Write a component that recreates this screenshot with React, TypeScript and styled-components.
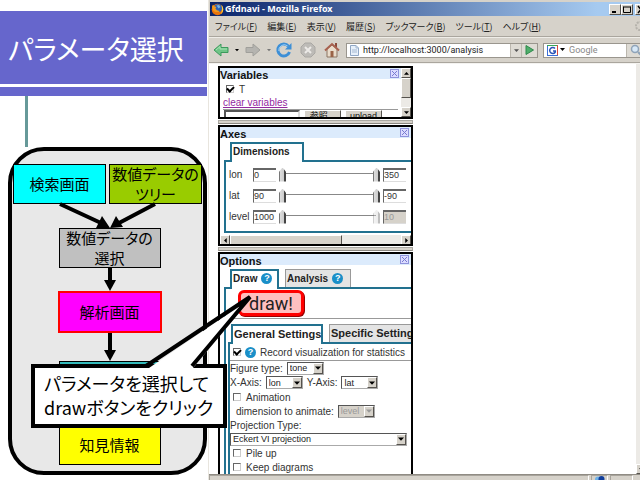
import React from "react";
import styled, { createGlobalStyle, css } from "styled-components";

const Global = createGlobalStyle`
  * { box-sizing: border-box; }
  body { margin: 0; background: #fff; overflow: hidden; }
  button, input, select { font: inherit; color: inherit; margin: 0; }
`;

const JP = `"Noto Sans CJK JP", sans-serif`;
const UI = `"Liberation Sans", "Noto Sans CJK JP", sans-serif`;

/* ---------- slide ---------- */

const Slide = styled.main`
  display: grid;
  grid-template-columns: 32.5% 1fr;
  grid-template-rows: minmax(0, 1fr);
  height: 100vh;
  overflow: hidden;
`;

const Outline = styled.section`
  display: flex;
  flex-direction: column;
  padding-top: 11px;
  font-family: ${JP};
  font-feature-settings: "palt";
`;

const Title = styled.h1`
  margin: 0;
  height: 73px;
  padding-left: 8px;
  margin-right: 1px;
  background: #6666cc;
  color: #fff;
  font-size: 27px;
  font-weight: 400;
  line-height: 75px;
  white-space: nowrap;
`;

const TitleRule = styled.div`
  height: 9px;
  margin: 3px 1px 0 0;
  background: #6666cc;
`;

const Stem = styled.div`
  width: 3px;
  height: 51px;
  margin-left: 25px;
  background: #669999;
`;

const Flow = styled.div`
  position: relative;
  margin: 0 1px 0 8px;
  height: 328px;
  padding: 13px 1px 0;
  border: 4px solid #000;
  border-radius: 36px;
  background: #e8e8e8;
  color: #000;
  font-size: 15px;
  line-height: 20px;
`;

const Sources = styled.div`
  display: grid;
  grid-template-columns: 1fr 1fr;
  gap: 3px;
`;

const Steps = styled.div`
  display: flex;
  flex-direction: column;
  align-items: center;
  padding-left: 4px;
`;

const Step = styled.div<{ $bg: string; $active?: boolean }>`
  display: flex;
  align-items: center;
  justify-content: center;
  height: ${(p) => (p.$active ? 42 : 40)}px;
  border: ${(p) => (p.$active ? "2px solid #f00" : "1px solid #000")};
  background: ${(p) => p.$bg};
  text-align: center;
  white-space: nowrap;
  ${Steps} > & { width: ${(p) => (p.$active ? 104 : 102)}px; }
`;

const StepGap = styled.div`
  height: 24px;
`;

const Drawing = styled.svg`
  display: block;
  flex: none;
  overflow: visible;
`;

const Callout = styled.aside`
  position: absolute;
  z-index: 5;
  left: 19px;
  top: 213px;
  width: 196px;
  height: 64px;
  padding: 3px 0 0 9px;
  border: 4px solid #000;
  background: #fff;
  font-size: 18px;
  line-height: 24px;
  white-space: nowrap;
`;

const Pointer = styled.svg`
  position: absolute;
  left: 111px;
  top: -73px;
  overflow: visible;
`;

/* ---------- browser ---------- */

const Browser = styled.section`
  display: flex;
  flex-direction: column;
  min-width: 0;
  padding-top: 2px;
  border-left: 1px solid #e8e5de;
  background: #d6d2ca;
  color: #222;
  font-family: Roboto, ${JP};
  font-size: 9px;
  white-space: nowrap;
`;

const TitleBar = styled.header`
  display: flex;
  align-items: center;
  gap: 1px;
  height: 14px;
  margin-left: 1px;
  padding-left: 1px;
  overflow: hidden;
  background: linear-gradient(90deg, #0a246a, #a6caf0 90%);
  color: #fff;
  font: 700 9px/14px "Noto Sans", sans-serif;
`;

const WindowButtons = styled.div`
  display: flex;
  margin: 0 -7px 0 auto;
`;

const Raised = css`
  border: 1px solid;
  border-color: #fff #55524d #55524d #fff;
  background: #d6d2ca;
`;

const WindowButton = styled.button`
  ${Raised}
  display: flex;
  align-items: center;
  justify-content: center;
  width: 12px;
  height: 11px;
  padding: 0;
  &:last-child { margin-left: 2px; }
`;

const MenuBar = styled.nav`
  display: flex;
  align-items: center;
  gap: 10px;
  height: 21px;
  padding-left: 6px;
  border-bottom: 1px solid #aaa69e;
  font-family: "Noto Sans", ${JP};
  font-feature-settings: "palt";
  button { padding: 0; border: 0; background: none; font-family: ${JP}; }
  svg { margin: 0 -7px 0 auto; }
`;

const ToolBar = styled.div`
  display: flex;
  align-items: center;
  height: 26px;
  padding-left: 4px;
  border-top: 1px solid #efede8;
  border-bottom: 1px solid #aaa69e;
`;

const ToolButton = styled.button<{ $gap?: number }>`
  display: flex;
  padding: 0;
  margin-right: ${(p) => p.$gap ?? 8}px;
  border: 0;
  background: none;
`;

const Field = styled.label<{ $grow?: boolean }>`
  display: flex;
  align-items: center;
  height: 15px;
  min-width: 0;
  flex: ${(p) => (p.$grow ? "1 1 0" : "0 0 105px")};
  border: 1px solid #9a968e;
  background: #fff;
  padding-left: 3px;
  margin-right: ${(p) => (p.$grow ? 5 : -8)}px;
  input {
    flex: 1;
    min-width: 0;
    padding: 0 0 0 4px;
    border: 0;
    outline: 0;
    background: none;
    line-height: 12px;
  }
  input::placeholder { color: #888; opacity: 1; }
`;

const FieldButton = styled.button<{ $w: number }>`
  display: flex;
  align-items: center;
  justify-content: center;
  width: ${(p) => p.$w}px;
  height: 13px;
  padding: 0;
  border: 0;
  border-left: 1px solid #bbb7ae;
  background: #dedbd4;
`;

const Viewport = styled.div`
  display: flex;
  flex: 1;
  min-height: 0;
  border-top: 1px solid #f4f3f0;
  background: #fff;
`;

const Page = styled.div`
  flex: 1;
  min-width: 0;
  padding: 2px 0 0 9px;
  overflow: hidden;
  color: #333;
  font-family: ${UI};
  font-size: 10px;
`;

const PageScroll = styled.div`
  display: flex;
  align-items: flex-end;
  width: 4px;
  overflow: hidden;
  background: #eceae6;
`;

const StatusBar = styled.footer`
  display: flex;
  justify-content: flex-end;
  gap: 2px;
  height: 6px;
  padding-right: 7px;
  overflow: hidden;
  border-top: 1px solid #908c84;
`;

const StatusCell = styled.div<{ $w?: number }>`
  ${(p) => (p.$w ? `width: ${p.$w}px;` : "flex: 1;")}
  height: 12px;
  padding-left: 3px;
  border: 1px solid;
  border-color: #a8a49c #fff #fff #a8a49c;
`;

/* ---------- page panels ---------- */

const Panels = styled.div`
  width: 195px;
`;

const Panel = styled.section<{ $h: number }>`
  height: ${(p) => p.$h}px;
  overflow: hidden;
  border: 2px solid #000;
`;

const Divider = styled.div`
  height: 4px;
  margin: 1px 0;
  border: 1px solid;
  border-color: #aaa8a2 #aaa8a2 #8a8781;
  background: #d6d2ca;
`;

const PanelHead = styled.header`
  display: flex;
  align-items: center;
  justify-content: space-between;
  height: 11px;
  padding-right: 2px;
  background: #dcebfc;
  h2 { margin: 0; color: #111; font-size: 11px; line-height: 16px; font-weight: 700; padding-top: 3px; }
`;

const CloseBox = styled.button`
  display: flex;
  padding: 1px;
  border: 1px solid #8f93dc;
  background: #dcdcff;
`;

const Columns = styled.div`
  display: flex;
  height: 49px;
  > div:first-child { flex: 1; min-width: 0; }
`;

const VariableBody = styled.div`
  padding: 2px 3px 0;
  a { display: block; color: #93299f; font-size: 10px; line-height: 12px; }
  hr { margin: 0; border: 0; border-top: 1px solid #999; }
`;

const CheckRow = styled.label<{ $h: number; $gap?: number }>`
  display: flex;
  align-items: center;
  gap: ${(p) => p.$gap ?? 5}px;
  height: ${(p) => p.$h}px;
  padding-left: 3px;
  white-space: nowrap;
`;

const Check = styled.input.attrs({ type: "checkbox" })`
  appearance: none;
  display: grid;
  place-items: center;
  flex: none;
  width: 8px;
  height: 8px;
  border: 1px solid;
  border-color: #666 #ccc #ccc #666;
  background: #fff;
  &:checked::after {
    content: "";
    width: 5px;
    height: 3px;
    margin-top: -2px;
    border: solid #000;
    border-width: 0 0 2px 2px;
    transform: rotate(-45deg);
  }
`;

const Upload = styled.div`
  display: flex;
  gap: 4px;
  padding-left: 1px;
  input { width: 76px; height: 13px; border: 2px solid; border-color: #555 #ddd #ddd #555; }
  button { ${Raised} height: 13px; width: 37px; padding: 0; font-size: 9px; line-height: 11px; color: #111; }
`;

const VScroll = styled.div`
  display: flex;
  flex-direction: column;
  justify-content: space-between;
  width: 10px;
  background: #eceae6;
`;

const HScroll = styled.div`
  display: flex;
  height: 10px;
  background: #eceae6;
  justify-content: space-between;
`;

const ScrollPart = styled.button<{ $w?: number; $h?: number }>`
  ${Raised}
  display: flex;
  align-items: center;
  justify-content: center;
  flex: none;
  width: ${(p) => p.$w ?? 10}px;
  height: ${(p) => p.$h ?? 10}px;
  padding: 0;
`;

const Tabs = styled.div<{ $in?: number }>`
  display: flex;
  align-items: flex-end;
  gap: 6px;
  height: 19px;
  padding-left: ${(p) => p.$in ?? 6}px;
`;

const Tab = styled.button<{ $on?: boolean; $w: number; $large?: boolean }>`
  display: flex;
  align-items: center;
  gap: 4px;
  flex: none;
  width: ${(p) => p.$w}px;
  height: ${(p) => (p.$on ? 20 : 18)}px;
  margin-bottom: ${(p) => (p.$on ? -2 : 0)}px;
  padding: 0 0 ${(p) => (p.$on ? 3 : 1)}px 1px;
  border: ${(p) => (p.$on ? "2px solid #22718f" : "1px solid #999")};
  border-bottom: 0;
  background: ${(p) => (p.$on ? "#fff" : "#e4e4e4")};
  color: #222;
  font-size: ${(p) => (p.$large ? 11 : 10)}px;
  font-weight: 700;
  white-space: nowrap;
`;

const TabPane = styled.div<{ $h?: number; $pad?: string }>`
  ${(p) => p.$h && `height: ${p.$h}px;`}
  padding: ${(p) => p.$pad ?? "0"};
  border: solid #22718f;
  border-width: 2px 0 2px 2px;
`;

const TabSet = styled.div<{ $top: number; $left: number }>`
  padding: ${(p) => p.$top}px 0 0 ${(p) => p.$left}px;
`;

const AxisRow = styled.div`
  display: grid;
  grid-template-columns: 24px 23px minmax(0, 1fr) 23px 5px;
  align-items: center;
  height: 21px;
`;

const TextBox = styled.input`
  width: 23px;
  height: 14px;
  padding: 0;
  border: 2px solid;
  border-color: #666 #ddd #ddd #666;
  border-width: 2px 0 1px 1px;
  background: #fff;
  font-size: 9px;
  &:disabled { background: #d6d2ca; color: #999; }
`;

const Range = styled.div`
  display: flex;
  align-items: center;
  min-width: 0;
  margin: 0 3px;
  height: 14px;
  background: linear-gradient(#888, #888) center 5px / 92px 1px no-repeat;
`;

const Slider = styled.input.attrs({ type: "range" })`
  appearance: none;
  flex: 1 1 0;
  width: 0;
  min-width: 0;
  height: 14px;
  background: none;
  &::-webkit-slider-thumb {
    appearance: none;
    width: 7px;
    height: 14px;
    border: 0;
    background: linear-gradient(90deg, #777 1px, #ddd 1px, #ccc 5px, #444 5px);
    clip-path: polygon(0 30%, 50% 0, 100% 30%, 100% 100%, 0 100%);
  }
  &:disabled { opacity: 0.35; }
`;

const DrawButton = styled.button`
  display: block;
  width: 66px;
  height: 26px;
  margin: 1px 0 2px 12px;
  padding: 0;
  border: 3px solid #f00;
  border-radius: 6px;
  background: #ffbfbf;
  box-shadow: 1px 1px 0 #900;
  color: #222;
  font: 18px/19px Roboto, sans-serif;
`;

const Rule = styled.hr`
  margin: 0;
  border: 0;
  border-top: 1px solid #999;
`;

const Line = styled.div<{ $h: number; $in?: number }>`
  display: flex;
  align-items: center;
  gap: 4px;
  height: ${(p) => p.$h}px;
  padding-left: ${(p) => p.$in ?? 0}px;
  white-space: nowrap;
`;

const SelectBox = styled.span<{ $w?: number; $off?: boolean }>`
  display: flex;
  align-items: center;
  ${(p) => (p.$w ? `width: ${p.$w}px;` : "flex: 1; margin-right: 4px;")}
  height: 13px;
  border: 1px solid;
  border-color: #555 #aaa #aaa #555;
  background: ${(p) => (p.$off ? "#d6d2ca" : "#fff")};
  color: ${(p) => (p.$off ? "#999" : "#222")};
  font-size: 9px;
  select {
    appearance: none;
    flex: 1;
    min-width: 0;
    padding: 0 0 0 2px;
    border: 0;
    background: none;
    color: inherit;
    opacity: 1;
  }
  span { ${Raised} display: flex; align-items: center; justify-content: center; width: 10px; height: 11px; }
`;

const Help = styled.span`
  display: inline-flex;
  align-items: center;
  justify-content: center;
  flex: none;
  width: 11px;
  height: 11px;
  border-radius: 50%;
  background: #1a8fc8;
  color: #fff;
  font: 700 9px/11px "Liberation Sans", sans-serif;
`;

/* ---------- icons ---------- */

const turns = { down: 0, left: 90, up: 180, right: 270 };
const Caret = ({ dir = "down", color = "#000", size = 5 }: { dir?: keyof typeof turns; color?: string; size?: number }) => (
  <Drawing width={size} height={size} viewBox="0 0 6 6" aria-hidden>
    <path d="M0 1.5h6L3 4.8z" fill={color} transform={`rotate(${turns[dir]} 3 3)`} />
  </Drawing>
);

const ArrowIcon = ({ back }: { back?: boolean }) => (
  <Drawing width="16" height="14" viewBox="0 0 16 14">
    <path
      d="M1 7 8 1v3.500h7v5H8V13z"
      transform={back ? undefined : "rotate(180 8 7)"}
      fill={back ? "#6fc487" : "#b5b4b0"}
      stroke={back ? "#3b9a5c" : "#a09f9b"}
      strokeLinejoin="round"
    />
    {back && <path d="M3 7 7 3.500V6h7" fill="none" stroke="#a8e2b4" />}
  </Drawing>
);

const FoxIcon = () => (
  <Drawing width="13" height="13" viewBox="0 0 13 13">
    <circle cx="6.500" cy="6.500" r="5.800" fill="#e8740c" />
    <circle cx="7" cy="5.200" r="3.900" fill="#2a62b8" />
    <path d="M5.500 2.500 8 2l1.500 2-2 1.500z" fill="#77b3e6" />
    <path d="M1 3.500 2 1.500l1.200 1.700 2.200.8-1 1.500 1.500 1.800 3 .6c-2 2-6 1.500-7.200-1.500z" fill="#f39a1d" />
    <path d="M10.500 2c2.500 2.500 2.200 7-.5 9 1.200-2.500 1.300-6 .5-9z" fill="#ffd23c" />
  </Drawing>
);

const Select = ({ label, value, w, off }: { label: string; value: string; w?: number; off?: boolean }) => (
  <SelectBox $w={w} $off={off}>
    <select aria-label={label} disabled={off} defaultValue={value}>
      <option>{value}</option>
    </select>
    <span aria-hidden>
      <Caret color={off ? "#999" : "#000"} size={6} />
    </span>
  </SelectBox>
);

const Head = ({ title }: { title: string }) => (
  <PanelHead>
    <h2>{title}</h2>
    <CloseBox aria-label={`Close ${title}`}>
      <Drawing width="5" height="5" viewBox="0 0 5 5">
        <path d="M0 0l5 5M5 0L0 5" stroke="#777bd0" />
      </Drawing>
    </CloseBox>
  </PanelHead>
);

const menus: [string, string][] = [
  ["ファイル", "F"],
  ["編集", "E"],
  ["表示", "V"],
  ["履歴", "S"],
  ["ブックマーク", "B"],
  ["ツール", "T"],
  ["ヘルプ", "H"],
];

const axes = [
  { name: "lon", from: "0", to: "350" },
  { name: "lat", from: "90", to: "-90" },
  { name: "level", from: "1000", to: "10", fixed: true },
];

const DownArrow = ({ h }: { h: number }) => (
  <Drawing width="14" height={h}>
    <path d={`M7 0V${h - 9}`} stroke="#000" strokeWidth="4" />
    <path d={`M1 ${h - 11}h12L7 ${h}z`} />
  </Drawing>
);

const FlowChart = () => (
  <Flow>
    <Sources>
      <Step $bg="#00ffff">検索画面</Step>
      <Step $bg="#99cc00">
        数値データの
        <br />
        ツリー
      </Step>
    </Sources>
    <Drawing width="191" height="24">
      <path d="M47 0 88 19M142 0 106 19" stroke="#000" strokeWidth="4" />
      <path d="M97 24 83 24 89 12zM97 24 103 12 110 23z" />
    </Drawing>
    <Steps>
      <Step $bg="#c0c0c0">
        数値データの
        <br />
        選択
      </Step>
      <DownArrow h={23} />
      <Step $bg="#ff00ff" $active>
        解析画面
      </Step>
      <DownArrow h={28} />
      <Step $bg="#33bbbb" />
      <StepGap />
      <Step $bg="#ffff00">知見情報</Step>
    </Steps>
    <Callout>
      パラメータを選択して
      <br />
      drawボタンをクリック
      <Pointer width="110" height="76">
        <path d="M3 73 104 4 47 73z" fill="#fff" />
        <path d="M0 71 104 2 46 71" fill="none" stroke="#000" strokeWidth="4" />
      </Pointer>
    </Callout>
  </Flow>
);

const VariablesPanel = () => (
  <Panel $h={53}>
    <Columns>
      <div>
        <Head title="Variables" />
        <VariableBody>
          <CheckRow $h={16}>
            <Check defaultChecked />T
          </CheckRow>
          <a href="#clear">clear variables</a>
          <hr />
          <Upload>
            <input aria-label="File" />
            <button>参照...</button>
            <button>upload</button>
          </Upload>
        </VariableBody>
      </div>
      <VScroll>
        <div>
          <ScrollPart aria-label="Scroll up"><Caret dir="up" /></ScrollPart>
          <ScrollPart aria-label="Scroll thumb" $h={20} />
        </div>
        <ScrollPart aria-label="Scroll down"><Caret /></ScrollPart>
      </VScroll>
    </Columns>
  </Panel>
);

const AxesPanel = () => (
  <Panel $h={121}>
    <Head title="Axes" />
    <TabSet $top={3} $left={4}>
      <Tabs>
        <Tab $on $w={74}>Dimensions</Tab>
      </Tabs>
      <TabPane $h={73} $pad="2px 0 0 3px">
        {axes.map((a) => (
          <AxisRow key={a.name}>
            <span>{a.name}</span>
            <TextBox aria-label={`${a.name} from`} defaultValue={a.from} />
            <Range>
              <Slider aria-label={`${a.name} lower`} defaultValue={0} />
              <Slider aria-label={`${a.name} upper`} defaultValue={100} disabled={a.fixed} />
            </Range>
            <TextBox aria-label={`${a.name} to`} defaultValue={a.to} disabled={a.fixed} />
          </AxisRow>
        ))}
      </TabPane>
    </TabSet>
    <TabSet $top={2} $left={0}>
      <HScroll>
        <Columns>
          <ScrollPart aria-label="Scroll left"><Caret dir="left" /></ScrollPart>
          <ScrollPart aria-label="Scroll thumb" $w={112} />
        </Columns>
        <ScrollPart aria-label="Scroll right"><Caret dir="right" /></ScrollPart>
      </HScroll>
    </TabSet>
  </Panel>
);

const OptionsPanel = () => (
  <Panel $h={230}>
    <Head title="Options" />
    <TabSet $top={3} $left={4}>
      <Tabs>
        <Tab $on $w={49}>Draw <Help>?</Help></Tab>
        <Tab $w={66}>Analysis <Help>?</Help></Tab>
      </Tabs>
      <TabPane>
        <DrawButton>draw!</DrawButton>
        <Rule />
        <TabSet $top={4} $left={2}>
          <Tabs $in={3}>
            <Tab $on $large $w={92}>General Settings</Tab>
            <Tab $large $w={100}>Specific Settings</Tab>
          </Tabs>
          <TabPane $h={150}>
            <CheckRow $h={16} $gap={4}>
              <Check defaultChecked /><Help>?</Help>Record visualization for statistics
            </CheckRow>
            <Rule />
            <Line $h={14}>Figure type: <Select label="Figure type" value="tone" w={37} /></Line>
            <Line $h={15}>
              X-Axis: <Select label="X-Axis" value="lon" w={37} /> Y-Axis:
              <Select label="Y-Axis" value="lat" w={37} />
            </Line>
            <CheckRow $h={14}><Check />Animation</CheckRow>
            <Line $h={14} $in={6}>
              dimension to animate: <Select label="Dimension to animate" value="level" w={37} off />
            </Line>
            <Line $h={14}>Projection Type:</Line>
            <Line $h={14}><Select label="Projection type" value="Eckert VI projection" /></Line>
            <CheckRow $h={14}><Check />Pile up</CheckRow>
            <CheckRow $h={14}><Check />Keep diagrams</CheckRow>
          </TabPane>
        </TabSet>
      </TabPane>
    </TabSet>
  </Panel>
);

export default function App() {
  return (
    <>
      <Global />
      <Slide>
        <Outline>
          <Title>パラメータ選択</Title>
          <TitleRule />
          <Stem />
          <FlowChart />
        </Outline>
        <Browser>
          <TitleBar>
            <FoxIcon />
            Gfdnavi - Mozilla Firefox
            <WindowButtons>
              <WindowButton aria-label="Minimize">
                <Drawing width="8" height="7"><path d="M1 6h4" stroke="#000" strokeWidth="2" /></Drawing>
              </WindowButton>
              <WindowButton aria-label="Maximize">
                <Drawing width="8" height="7"><path d="M.5 1h7M.5.5v6h7v-6" fill="none" stroke="#000" /></Drawing>
              </WindowButton>
              <WindowButton aria-label="Close">
                <Drawing width="8" height="7"><path d="M1 0l6 7M7 0L1 7" stroke="#000" strokeWidth="1.5" /></Drawing>
              </WindowButton>
            </WindowButtons>
          </TitleBar>
          <MenuBar>
            {menus.map(([name, key]) => (
              <button key={name}>{name}(<u>{key}</u>)</button>
            ))}
            <Drawing width="16" height="12">
              <circle cx="9" cy="6" r="4" fill="none" stroke="#b5b2ab" strokeWidth="2" strokeDasharray="2 1" />
            </Drawing>
          </MenuBar>
          <ToolBar>
            <ToolButton aria-label="Back" $gap={6}><ArrowIcon back /></ToolButton>
            <ToolButton aria-label="Back history" $gap={6}><Caret size={4} /></ToolButton>
            <ToolButton aria-label="Forward" $gap={6}><ArrowIcon /></ToolButton>
            <ToolButton aria-label="Forward history" $gap={5}><Caret size={4} color="#777" /></ToolButton>
            <ToolButton aria-label="Reload">
              <Drawing width="16" height="16" viewBox="0 0 16 16">
                <path d="M12.500 4.200A6 6 0 1 0 13.500 10" fill="none" stroke="#3d8fd6" strokeWidth="3" />
                <path d="M15.500 1v6.500H9z" fill="#3d8fd6" />
                <path d="M11.500 3.800A5.500 5.500 0 0 0 2.800 9" fill="none" stroke="#9fd0f5" />
              </Drawing>
            </ToolButton>
            <ToolButton aria-label="Stop">
              <Drawing width="16" height="16" viewBox="0 0 16 16">
                <path d="M5 1h6l4 4v6l-4 4H5l-4-4V5z" fill="#bdbbb7" stroke="#aaa8a4" />
                <path d="M5 5l6 6M11 5l-6 6" stroke="#eceae7" strokeWidth="2" />
              </Drawing>
            </ToolButton>
            <ToolButton aria-label="Home" $gap={6}>
              <Drawing width="16" height="16" viewBox="0 0 16 16">
                <path d="M3 7v8h10V7L8 3z" fill="#e9dccb" stroke="#8b7462" />
                <path d="M11 1h2v4h-2z" fill="#8a4a3a" />
                <path d="M1 8.500 8 2l7 6.500" fill="none" stroke="#a8614f" strokeWidth="2" />
                <path d="M6.500 9h3v6h-3z" fill="#9a6347" />
              </Drawing>
            </ToolButton>
            <Field $grow>
              <Drawing width="9" height="11" viewBox="0 0 9 11">
                <path d="M.5.5H6L8.500 3v7.500h-8z" fill="#e7f0fa" stroke="#8fa6c4" />
                <path d="M6 .5V3h2.500M2 5h5M2 7h5" fill="none" stroke="#a5b9d2" />
              </Drawing>
              <input aria-label="Address" defaultValue="http://localhost:3000/analysis" />
              <FieldButton aria-label="Address history" $w={11}><Caret color="#555" /></FieldButton>
              <FieldButton aria-label="Go" $w={16}>
                <Drawing width="9" height="10"><path d="M1 .5 8.500 5 1 9.500z" fill="#4fae6b" stroke="#2f8a4c" /></Drawing>
              </FieldButton>
            </Field>
            <Field>
              <Drawing width="11" height="11" viewBox="0 0 11 11">
                <path d="M0 0h11v11H0z" fill="#fff" />
                <path d="M.5 11V.5" stroke="#3b6fd8" />
                <path d="M0 .5h11" stroke="#3aa757" />
                <path d="M10.500 0v11" stroke="#d9473d" />
                <path d="M0 10.500h11" stroke="#3b6fd8" />
                <path d="M8 3.500A3 3 0 1 0 8.300 7V6H6" fill="none" stroke="#2c55b8" strokeWidth="1.500" />
              </Drawing>
              <Drawing width="7" height="4" viewBox="0 0 7 4"><path d="M2 0h5L4.500 3z" /></Drawing>
              <input aria-label="Search" placeholder="Google" />
              <FieldButton aria-label="Search the web" $w={21}>
                <Drawing width="14" height="12">
                  <circle cx="5" cy="5" r="3.500" fill="#d7e8f7" stroke="#8fa3b8" strokeWidth="1.500" />
                  <path d="M8 8l4 4" stroke="#8fa3b8" strokeWidth="2" />
                </Drawing>
              </FieldButton>
            </Field>
          </ToolBar>
          <Viewport>
            <Page>
              <Panels>
                <VariablesPanel />
                <Divider />
                <AxesPanel />
                <Divider />
                <OptionsPanel />
              </Panels>
            </Page>
            <PageScroll>
              <ScrollPart aria-label="Scroll page down"><Caret /></ScrollPart>
            </PageScroll>
          </Viewport>
          <StatusBar>
            <StatusCell />
            <StatusCell $w={17}>
              <Drawing width="10" height="9">
                <circle cx="3" cy="3.500" r="3" fill="#6fb2e8" />
                <circle cx="6.500" cy="3" r="3" fill="#123f9c" />
              </Drawing>
            </StatusCell>
            <StatusCell $w={23} />
          </StatusBar>
        </Browser>
      </Slide>
    </>
  );
}
